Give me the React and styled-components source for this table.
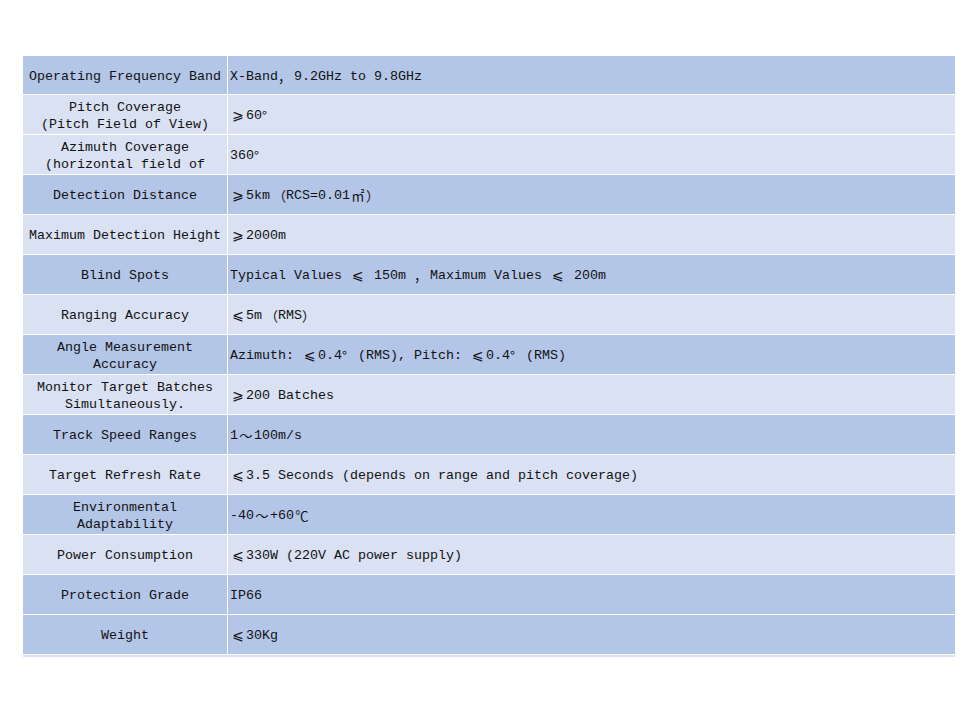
import React from "react";
import styled, { createGlobalStyle } from "styled-components";

const Global = createGlobalStyle`
  html, body { margin: 0; padding: 0; background: #ffffff; }
  body { font-family: "Liberation Mono", "Noto Sans CJK SC", monospace; }
`;

const DARK = "#b4c6e7";
const LIGHT = "#d9e1f2";

const Page = styled.div`
  padding: 56px 0 0 23px;
  width: 979px;
  height: 711px;
  box-sizing: border-box;
`;

const Table = styled.div`
  display: grid;
  grid-template-columns: 204px 727px;
  grid-auto-rows: 39px;
  grid-template-rows: 38px;
  gap: 1px;
  width: 932px;
  background: #ffffff;
`;

const Cell = styled.div`
  background: ${(p) => (p.$dark ? DARK : LIGHT)};
  display: flex;
  flex-direction: column;
  justify-content: center;
  align-items: ${(p) => (p.$center ? "center" : "flex-start")};
  text-align: ${(p) => (p.$center ? "center" : "left")};
  padding: ${(p) => (p.$center ? "2px 0 0 0" : "2px 0 0 2px")};
  box-sizing: border-box;
  font-size: 13.33px;
  line-height: 17px;
  color: #111111;
  white-space: pre;
  overflow: hidden;
`;

const Line = styled.span`
  display: block;
`;

const BottomStrip = styled.div`
  margin-top: 1px;
  width: 932px;
  height: 2px;
  background: ${LIGHT};
`;

const W = styled.span`
  display: inline-block;
  width: 16px;
  text-align: ${(p) => p.$align || "center"};
  font-family: ${(p) => (p.$math ? '"DejaVu Sans", sans-serif' : '"Noto Sans CJK SC", sans-serif')};
  font-size: ${(p) => (p.$math ? "14px" : "13.33px")};
  line-height: 17px;
  vertical-align: top;
`;

const renderText = (s) => {
  const out = [];
  let buf = "";
  [...s].forEach((ch, i) => {
    if (ch.charCodeAt(0) > 0x7f) {
      if (buf) out.push(buf);
      buf = "";
      const math = ch === "⩾" || ch === "⩽";
      const align = ch === "°" ? "left" : ch === "（" ? "right" : ch === "）" || ch === "，" ? "left" : "center";
      out.push(
        <W key={i} $math={math} $align={align}>
          {ch}
        </W>
      );
    } else {
      buf += ch;
    }
  });
  if (buf) out.push(buf);
  return out;
};

const rows = [
  { k: ["Operating Frequency Band"], v: "X-Band，9.2GHz to 9.8GHz", d: true },
  { k: ["Pitch Coverage", "(Pitch Field of View)"], v: "⩾60°", d: false },
  { k: ["Azimuth Coverage", "(horizontal field of"], v: "360°", d: false },
  { k: ["Detection Distance"], v: "⩾5km（RCS=0.01㎡）", d: true },
  { k: ["Maximum Detection Height"], v: "⩾2000m", d: false },
  { k: ["Blind Spots"], v: "Typical Values ⩽ 150m ，Maximum Values ⩽ 200m", d: true },
  { k: ["Ranging Accuracy"], v: "⩽5m（RMS）", d: false },
  { k: ["Angle Measurement", "Accuracy"], v: "Azimuth: ⩽0.4°(RMS), Pitch: ⩽0.4°(RMS)", d: true },
  { k: ["Monitor Target Batches", "Simultaneously."], v: "⩾200 Batches", d: false },
  { k: ["Track Speed Ranges"], v: "1～100m/s", d: true },
  { k: ["Target Refresh Rate"], v: "⩽3.5 Seconds (depends on range and pitch coverage)", d: false },
  { k: ["Environmental", "Adaptability"], v: "-40～+60℃", d: true },
  { k: ["Power Consumption"], v: "⩽330W (220V AC power supply)", d: false },
  { k: ["Protection Grade"], v: "IP66", d: true },
  { k: ["Weight"], v: "⩽30Kg", d: true },
];

export default function App() {
  return (
    <>
      <Global />
      <Page>
        <Table>
          {rows.map((r, i) => (
            <React.Fragment key={i}>
              <Cell $dark={r.d} $center>
                {r.k.map((l, j) => (
                  <Line key={j}>{l}</Line>
                ))}
              </Cell>
              <Cell $dark={r.d}>
                <Line>{renderText(r.v)}</Line>
              </Cell>
            </React.Fragment>
          ))}
        </Table>
        <BottomStrip />
      </Page>
    </>
  );
}
